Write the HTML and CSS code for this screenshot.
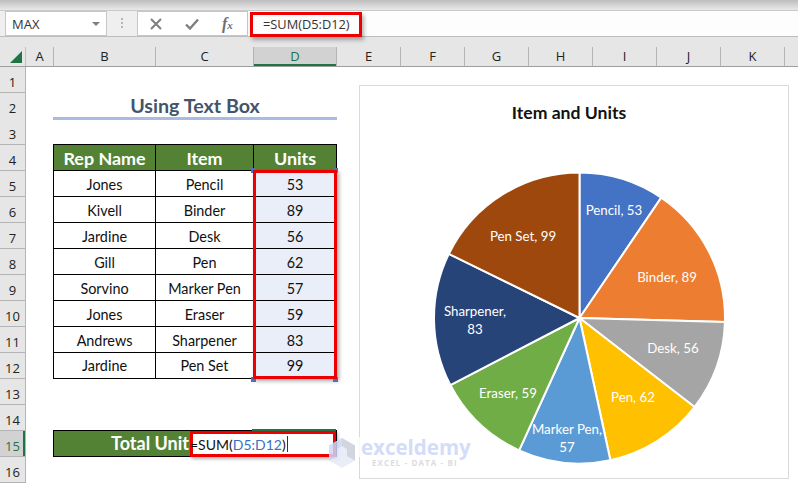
FILE: index.html
```html
<!DOCTYPE html>
<html lang="en">
<head>
<meta charset="utf-8">
<title>Using Text Box</title>
<link rel="stylesheet" href="styles.css">
</head>
<body>
<div class="top-strip"></div>
<div class="formula-bar">
  <div class="name-box"><span>MAX</span><i class="caret-down"></i></div>
  <div class="grip"></div>
  <div class="fx-box">
    <svg class="fx-icon" width="12" height="12" viewBox="0 0 12 12"><path d="M1 1 L11 11 M11 1 L1 11" fill="none" stroke="#7f7f7f" stroke-width="2"/></svg>
    <svg class="fx-icon" width="14" height="12" viewBox="0 0 14 12"><path d="M1 6.5 L5 10.5 L13 1.5" fill="none" stroke="#7f7f7f" stroke-width="2.4"/></svg>
    <span class="fx-label">f<small>x</small></span>
  </div>
  <div class="formula-input">=SUM(D5:D12)</div>
</div>
<div class="col-head">
  <div class="corner"><i></i></div>
  <div class="ch">A</div><div class="ch">B</div><div class="ch">C</div><div class="ch active">D</div>
  <div class="ch">E</div><div class="ch">F</div><div class="ch">G</div><div class="ch">H</div>
  <div class="ch">I</div><div class="ch">J</div><div class="ch">K</div><div class="ch"></div>
</div>
<div class="sheet">
  <div class="row"><div class="rh">1</div></div>
  <div class="row"><div class="rh">2</div><div class="title">Using Text Box</div></div>
  <div class="row"><div class="rh">3</div></div>
  <div class="row head"><div class="rh">4</div><div class="c b">Rep Name</div><div class="c">Item</div><div class="c d">Units</div></div>
  <div class="row data"><div class="rh">5</div><div class="c b">Jones</div><div class="c">Pencil</div><div class="c d">53</div></div>
  <div class="row data"><div class="rh">6</div><div class="c b">Kivell</div><div class="c">Binder</div><div class="c d">89</div></div>
  <div class="row data"><div class="rh">7</div><div class="c b">Jardine</div><div class="c">Desk</div><div class="c d">56</div></div>
  <div class="row data"><div class="rh">8</div><div class="c b">Gill</div><div class="c">Pen</div><div class="c d">62</div></div>
  <div class="row data"><div class="rh">9</div><div class="c b">Sorvino</div><div class="c">Marker Pen</div><div class="c d">57</div></div>
  <div class="row data"><div class="rh">10</div><div class="c b">Jones</div><div class="c">Eraser</div><div class="c d">59</div></div>
  <div class="row data"><div class="rh">11</div><div class="c b">Andrews</div><div class="c">Sharpener</div><div class="c d">83</div></div>
  <div class="row data last"><div class="rh">12</div><div class="c b">Jardine</div><div class="c">Pen Set</div><div class="c d">99</div></div>
  <div class="row"><div class="rh">13</div></div>
  <div class="row"><div class="rh">14</div></div>
  <div class="row"><div class="rh active">15</div><div class="total">Total Unit</div></div>
  <div class="row"><div class="rh">16</div></div>
</div>

<div class="formula-highlight"></div>
<div class="range-box"><i class="h tl"></i><i class="h tr"></i><i class="h bl"></i><i class="h br"></i></div>
<div class="editor"><span>=SUM(<b>D5:D12</b>)</span><i class="text-caret"></i></div>

<svg class="chart" width="430" height="394" viewBox="359 85 430 394">
  <rect x="359.5" y="85.5" width="429" height="393" fill="#fff" stroke="#d9d9d9"/>
  <text class="chart-title" x="569" y="119">Item and Units</text>
  <g class="pie">
    <path fill="#4472c4" d="M579.5 318 L579.5 172.5 A145.5 145.5 0 0 1 661.26 197.64 Z"/>
    <path fill="#ed7d31" d="M579.5 318 L661.26 197.64 A145.5 145.5 0 0 1 724.94 322.09 Z"/>
    <path fill="#a5a5a5" d="M579.5 318 L724.94 322.09 A145.5 145.5 0 0 1 694.56 407.06 Z"/>
    <path fill="#ffc000" d="M579.5 318 L694.56 407.06 A145.5 145.5 0 0 1 610.4 460.18 Z"/>
    <path fill="#5b9bd5" d="M579.5 318 L610.4 460.18 A145.5 145.5 0 0 1 519.12 450.37 Z"/>
    <path fill="#70ad47" d="M579.5 318 L519.12 450.37 A145.5 145.5 0 0 1 450.36 385.02 Z"/>
    <path fill="#264478" d="M579.5 318 L450.36 385.02 A145.5 145.5 0 0 1 448.86 253.92 Z"/>
    <path fill="#9e480e" d="M579.5 318 L448.86 253.92 A145.5 145.5 0 0 1 579.5 172.5 Z"/>
  </g>
  <g class="labels">
    <text x="614" y="215">Pencil, 53</text>
    <text x="667" y="282">Binder, 89</text>
    <text x="673" y="353">Desk, 56</text>
    <text x="633" y="402">Pen, 62</text>
    <text x="567" y="434">Marker Pen,</text>
    <text x="567" y="452">57</text>
    <text x="508" y="398">Eraser, 59</text>
    <text x="475" y="316">Sharpener,</text>
    <text x="475" y="334">83</text>
    <text x="523" y="241">Pen Set, 99</text>
  </g>
</svg>

<div class="watermark">
  <svg width="28" height="32" viewBox="0 0 28 32">
    <path d="M14 1 L27 8.5 L27 23.5 L14 31 L1 23.5 L1 8.5 Z" fill="#e6eaf6"/>
    <path d="M14 1 L27 8.5 L27 23.5 L19 19 L19 12 L14 9 Z" fill="#c9ced8"/>
    <path d="M1 8.5 L14 1 L14 9 L9 12 L9 20 L1 23.5 Z" fill="#ccd8f8"/>
  </svg>
  <div class="wm-text"><div class="wm-name">exceldemy</div><div class="wm-sub">EXCEL - DATA - BI</div></div>
</div>
</body>
</html>
```
FILE: styles.css
```css
* { box-sizing: border-box; }
html, body { margin: 0; padding: 0; }
body {
  width: 798px;
  height: 485px;
  overflow: hidden;
  background: #fff;
  font-family: "Lato", "Liberation Sans", sans-serif;
  color: #1a1a1a;
}
.top-strip {
  height: 11px;
  background: linear-gradient(#bdbdbd, #e9e9e9);
  border-bottom: 1px solid #c9c9c9;
}
.formula-bar {
  display: flex;
  height: 26px;
  background: #efefef;
  border-bottom: 1px solid #bdbdbd;
  padding-left: 5px;
}
.name-box {
  width: 102px;
  background: #fff;
  border: 1px solid #c6c6c6;
  display: flex;
  align-items: center;
  justify-content: space-between;
  padding: 0 6px;
  font: 13px "Open Sans", sans-serif;
  color: #333;
}
.caret-down {
  width: 0;
  height: 0;
  border: 4px solid transparent;
  border-top: 4px solid #7f7f7f;
  border-bottom: 0;
}
.grip {
  width: 2px;
  margin: 7px 14px;
  background: repeating-linear-gradient(#b5b5b5 0 2px, transparent 2px 4px);
}
.fx-box {
  width: 110px;
  background: #fff;
  border: 1px solid #c6c6c6;
  border-right: 0;
  display: flex;
  align-items: center;
  padding-left: 12px;
  gap: 23px;
}
.fx-label {
  font: italic 700 16px "Liberation Serif", serif;
  color: #6f6f6f;
}
.fx-label small { font-size: 11px; }
.formula-input {
  flex: 1;
  background: #fdfdfd;
  border-left: 1px solid #c6c6c6;
  padding: 4px 15px;
  font: 12.8px "Open Sans", sans-serif;
  color: #333;
}
.col-head {
  display: grid;
  grid-template-columns: 26px 28px 102px 98px 83px repeat(7, 64px);
  height: 30px;
  padding-top: 10px;
  background: #e6e6e6;
  border-bottom: 1px solid #9e9e9e;
}
.corner { position: relative; border-right: 1px solid #c0c0c0; }
.corner i {
  position: absolute;
  left: 10px;
  top: 4px;
  border-style: solid;
  border-width: 0 0 12px 12px;
  border-color: transparent transparent #217346 transparent;
}
.ch {
  text-align: center;
  font: 13px/19px "Open Sans", sans-serif;
  color: #222;
  border-right: 1px solid #b4b4b4;
}
.ch.active {
  background: #d2d2d2;
  color: #217346;
  box-shadow: inset 0 -2px 0 #217346;
}
.row {
  display: grid;
  grid-template-columns: 26px 27px 103px 98px 83px;
  height: 26px;
}
.rh {
  grid-column: 1;
  background: #e6e6e6;
  border-right: 1px solid #b4b4b4;
  border-bottom: 1px solid #b4b4b4;
  text-align: center;
  font: 13px/31px "Open Sans", sans-serif;
  color: #222;
  overflow: hidden;
}
.rh.active {
  background: #d2d2d2;
  color: #217346;
  box-shadow: inset -2px 0 0 #217346;
}
.title {
  grid-column: 3 / 6;
  text-align: center;
  font-weight: 700;
  font-size: 19.7px;
  line-height: 25px;
  color: #44546a;
  border-bottom: 3px solid #a9bce0;
  height: 27px;
}
.c {
  display: flex;
  align-items: center;
  justify-content: center;
  margin-top: -1px;
  border-top: 1px solid #000;
  border-right: 1px solid #000;
  font-size: 14.4px;
  color: #111;
}
.c.b { grid-column: 3; border-left: 1px solid #000; }
.c.d { background: #e9eef8; }
.head .c {
  background: #548235;
  color: #fff;
  font-weight: 700;
  font-size: 17.9px;
}
.last .c { border-bottom: 1px solid #000; }
.total {
  grid-column: 3 / 6;
  margin-top: -1px;
  background: #548235;
  border: 1px solid #000;
  text-align: right;
  padding-right: 147px;
  color: #fff;
  font-weight: 700;
  font-size: 18px;
  line-height: 24px;
}
.formula-highlight {
  position: absolute;
  left: 250px;
  top: 12px;
  width: 112px;
  height: 25px;
  border: 3px solid #ee0000;
  box-shadow: 2px 3px 4px rgba(0,0,0,.3);
}
.range-box {
  position: absolute;
  left: 253px;
  top: 170px;
  width: 84px;
  height: 209px;
  box-shadow: 2px 2px 4px rgba(0,0,0,.35);
}
.range-box::after {
  content: "";
  position: absolute;
  inset: 0;
  border: 3px solid #ee0000;
}
.h {
  position: absolute;
  width: 5px;
  height: 5px;
  background: #4472c4;
}
.tl { left: -2px; top: -2px; }
.tr { left: 80px; top: -2px; }
.bl { left: -2px; top: 207px; }
.br { left: 80px; top: 207px; }
.editor {
  position: absolute;
  left: 190px;
  top: 431px;
  width: 146px;
  height: 26px;
  background: #fff;
  border: 3px solid #ee0000;
  box-shadow: 2px 2px 3px rgba(0,0,0,.3);
  display: flex;
  align-items: center;
  font-size: 14px;
  color: #111;
  white-space: nowrap;
}
.editor::before {
  content: "";
  position: absolute;
  left: 59px;
  right: -3px;
  top: -5px;
  height: 2px;
  background: #217346;
}
.editor span { margin-left: -3px; }
.editor b { font-weight: 400; color: #3a6fc4; }
.text-caret {
  width: 1px;
  height: 16px;
  background: #333;
  margin-left: 1px;
}
.chart { position: absolute; left: 359px; top: 85px; }
.chart-title {
  font: 700 17.6px "Lato", sans-serif;
  fill: #111;
  text-anchor: middle;
}
.pie path { stroke: #fff; stroke-width: 2; stroke-linejoin: round; }
.labels text {
  font: 13.3px "Lato", sans-serif;
  fill: #fff;
  text-anchor: middle;
}
.watermark {
  position: absolute;
  left: 328px;
  top: 437px;
  display: flex;
  opacity: .85;
}
.wm-text { line-height: 1; }
.wm-name {
  background: #fff;
  padding-left: 5px;
  font: 700 20.5px/20px "Open Sans", sans-serif;
  color: #ccd8f8;
}
.wm-sub {
  margin: 1px 0 0 16px;
  font: 700 8px/10px "Open Sans", sans-serif;
  letter-spacing: 1.1px;
  color: #d4d6db;
  white-space: nowrap;
}
```
